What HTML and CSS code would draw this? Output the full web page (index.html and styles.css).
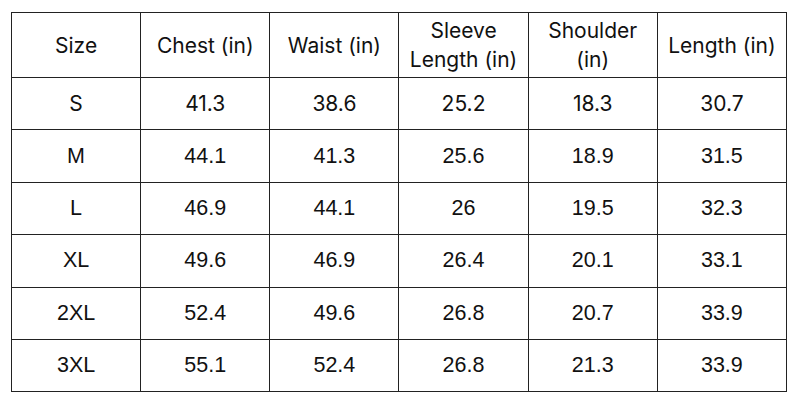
FILE: index.html
```html
<!DOCTYPE html>
<html lang="en">
  <head>
    <meta charset="UTF-8" />
    <meta name="viewport" content="width=device-width, initial-scale=1.0" />
    <title>Size Chart</title>
    <link rel="stylesheet" href="styles.css">
  </head>
  <body>
    <table class="size-chart">
      <thead>
        <tr>
          <th>Size</th>
          <th>Chest (in)</th>
          <th>Waist (in)</th>
          <th>Sleeve<br />Length (in)</th>
          <th>Shoulder<br />(in)</th>
          <th>Length (in)</th>
        </tr>
      </thead>
      <tbody>
        <tr class="first">
          <td>S</td><td>41.3</td><td>38.6</td><td>25.2</td><td>18.3</td><td>30.7</td>
        </tr>
        <tr>
          <td>M</td><td>44.1</td><td>41.3</td><td>25.6</td><td>18.9</td><td>31.5</td>
        </tr>
        <tr>
          <td>L</td><td>46.9</td><td>44.1</td><td>26</td><td>19.5</td><td>32.3</td>
        </tr>
        <tr>
          <td>XL</td><td>49.6</td><td>46.9</td><td>26.4</td><td>20.1</td><td>33.1</td>
        </tr>
        <tr>
          <td>2XL</td><td>52.4</td><td>49.6</td><td>26.8</td><td>20.7</td><td>33.9</td>
        </tr>
        <tr>
          <td>3XL</td><td>55.1</td><td>52.4</td><td>26.8</td><td>21.3</td><td>33.9</td>
        </tr>
      </tbody>
    </table>
  </body>
</html>
```

FILE: styles.css
```css
body {
  margin: 0;
  padding: 12px 0 0 11px;
  background: white;
}
.size-chart {
  width: 776px;
  border-collapse: collapse;
  table-layout: fixed;
  color: #111;
  font-family: "Liberation Sans", Arial, sans-serif;
  font-size: 21.5px;
}
.size-chart th,
.size-chart td {
  border: 1px solid #222;
  text-align: center;
  padding: 0;
}
.size-chart th {
  height: 64px;
  font-family: Inter, "Open Sans", sans-serif;
  font-weight: normal;
  font-size: 21px;
  line-height: 29px;
}
.size-chart td {
  height: 51.4px;
}
.size-chart .first td {
  font-family: Inter, "Open Sans", sans-serif;
  font-size: 21px;
}
```
